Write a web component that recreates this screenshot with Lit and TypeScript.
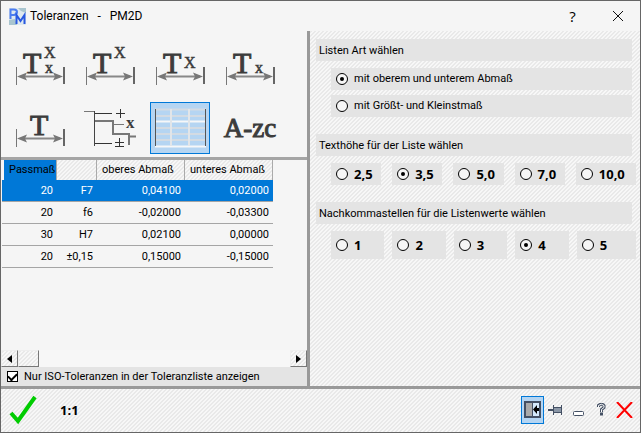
import { LitElement, html, svg, css } from "lit";
import { customElement, state } from "lit/decorators.js";

interface Row { size: string; fit: string; upper: string; lower: string; }

const ROWS: Row[] = [
  { size: "20", fit: "F7", upper: "0,04100", lower: "0,02000" },
  { size: "20", fit: "f6", upper: "-0,02000", lower: "-0,03300" },
  { size: "30", fit: "H7", upper: "0,02100", lower: "0,00000" },
  { size: "20", fit: "±0,15", upper: "0,15000", lower: "-0,15000" },
];

const dimension = svg`
  <path d="M3.500 22V40" stroke="#777" fill="none"/>
  <path d="M51 22V39" stroke="#666" stroke-width="2" fill="none"/>
  <path d="M9 31.500H47" stroke="#888" stroke-width="2" fill="none"/>
  <path d="M4 31.500L14 27.500L12 31.500L14 35.500ZM50 31.500L40 27.500L42 31.500L40 35.500Z" fill="#777"/>`;

const tolerance = (upper: number, lower: number, x = 10, y = 13) => html`
  <svg width="54" height="50" viewBox="0 -4 54 50" aria-hidden="true">
    ${dimension}
    <text x=${x} y="28" class="big">T</text>
    ${upper ? svg`<text x="31" y=${y} class="sup">X</text>` : ""}
    ${lower ? svg`<text x="32" y="28" class="sub">x</text>` : ""}
  </svg>`;

const stepIcon = html`
  <svg width="54" height="50" viewBox="0 -4 54 50" aria-hidden="true">
    <g fill="none" stroke="#777">
      <path d="M1 4.500H12"/><path d="M11.500 4V39" stroke="#444"/>
      <path d="M12 6.500H29M12 36.500H29" stroke="#333"/>
      <path d="M12 14H30V27H46V38M46 29.500H53" stroke-width="2"/>
      <path d="M30 17.500H41" />
      <path d="M33 6.500H42M37.500 2V11M32 35.500H41M36.500 31V39M32 39.500H41" stroke="#333"/>
    </g>
    <text x="43" y="21" class="step">x</text>
  </svg>`;

const tableIcon = html`
  <svg width="54" height="44" viewBox="0 0 54 44" aria-hidden="true">
    <path d="M2 3.500H53M2 10H53M2 22H53M2 28H53M2 34H53" stroke="#d3dbe3" stroke-width="2"/>
    <path d="M2 15.500H53M2 40.500H53" stroke="#f6f7f8" stroke-width="2"/>
    <path d="M18 3V40M36 3V40" stroke="#e1e5e9" stroke-width="2"/>
    <path d="M2.500 3V40M52.500 3V40" stroke="#555"/>
  </svg>`;

@customElement("app-root")
export class AppRoot extends LitElement {
  @state() private selected = 0;
  @state() private tool = 6;

  static styles = css`
    :host {
      display: flex;
      flex-direction: column;
      box-sizing: border-box;
      min-height: 100vh;
      border: 1px solid #666;
      background: #f5f5f5;
      color: #000;
      --hatch: linear-gradient(135deg, #e9e9e9 25%, #f7f7f7 25% 50%, #e9e9e9 50% 75%, #f7f7f7 75%) 0 0 / 4px 4px;
      --ui: Roboto, "Liberation Sans", sans-serif;
      font: 11px/16px var(--ui);
    }
    * { box-sizing: border-box; }
    button { padding: 0; border: 0; background: none; color: inherit; font: inherit; display: grid; place-items: center; }
    svg { display: block; }
    header { display: flex; align-items: center; height: 30px; padding-left: 8px; }
    header .logo { margin-right: 4px; }
    h1 { flex: 1; margin: 0; font: 12px/16px var(--ui); white-space: pre; }
    header button { width: 45px; height: 30px; }
    header .help { font: 15px/20px "Open Sans", sans-serif; }
    main { flex: 1; display: grid; grid-template-columns: minmax(0, 306fr) 3px minmax(0, 330fr); }
    .bar { background: #999; }
    .left { display: flex; flex-direction: column; }
    .tools { display: grid; grid-template-columns: repeat(4, 60px); gap: 10px; padding: 9px 9px 3px; }
    .tools button { height: 52px; border: 1px solid transparent; }
    .tools button.on { background: #b5d5f2; border-color: #0078d7; }
    text { font-family: "Liberation Serif", serif; fill: #3c3c3c; stroke: #3c3c3c; stroke-width: 0.5px; }
    .big { font-size: 30px; stroke-width: 1px; }
    .sup { font-size: 16px; }
    .sub { font-size: 16px; }
    .step { font-size: 17px; font-weight: bold; stroke: none; }
    .az { font: 27px/28px "Liberation Serif", serif; color: #3c3c3c; -webkit-text-stroke: 1px #3c3c3c; }
    .list { flex: 1; border-top: 3px solid #a5a5a5; padding-left: 1px; }
    table { border-collapse: separate; border-spacing: 0; table-layout: fixed; width: 271px; font: 11px/16px var(--ui); }
    th { height: 20px; padding: 0 0 0 5px; font-weight: normal; text-align: left; background: var(--hatch); border-right: 1px solid #aaa; white-space: nowrap; }
    th.key { background: #0078d7; border-left: 2px solid #f5f5f5; }
    td { height: 22px; padding: 0 4px 0 0; text-align: right; border-bottom: 1px solid #a5a5a5; }
    tr.on { background: #0078d7; color: #fff; }
    .scroll { display: flex; height: 17px; background: #f7f7f7; }
    .scroll button { width: 17px; background: var(--hatch); border: 1px solid; border-color: #eee #777 #777 #eee; }
    .scroll .thumb { width: 21px; margin-right: auto; }
    .iso { display: flex; align-items: center; gap: 6px; height: 19px; padding: 0 6px; background: #e4e4e4; }
    input { appearance: none; flex: none; margin: 0; background: #f6f6f6; border: 1px solid #000; display: grid; place-items: center; }
    .iso input { width: 11px; height: 11px; background: #fff; }
    .iso input:checked::before { content: ""; width: 7px; height: 4px; border: solid #000; border-width: 0 0 2px 2px; transform: translateY(-1px) rotate(-45deg); }
    .right { background: var(--hatch); padding: 8px 8px 8px 6px; }
    fieldset { border: 0; margin: 0 0 17px; padding: 0; min-width: 0; }
    legend { display: block; width: 100%; height: 22px; padding: 4px 3px 2px; background: #e4e4e4; margin-bottom: 7px; }
    .stack, .cols { display: grid; gap: 5px; padding-left: 15px; }
    .cols { grid-template-columns: repeat(4, minmax(0, 5fr)) minmax(0, 6fr); gap: 11px; margin-right: -4px; }
    .choice { display: flex; align-items: center; gap: 6px; height: 22px; padding-left: 5px; background: #e4e4e4; white-space: nowrap; }
    .choice input { width: 12px; height: 12px; border-radius: 50%; }
    .choice input:checked::before { content: ""; width: 4px; height: 4px; border-radius: 50%; background: #000; }
    .cols .choice { font: bold 13px/16px "Noto Sans", sans-serif; }
    .tall { grid-template-columns: repeat(4, minmax(0, 9fr)) minmax(0, 10fr); column-gap: 8px; }
    .tall .choice { height: 28px; }
    footer { display: flex; align-items: center; height: 46px; padding: 0 4px 2px 0; border-top: 3px solid #999; background: var(--hatch); }
    .ok { width: 44px; height: 40px; }
    .scale { margin: 0 auto 0 15px; font: bold 13px/16px "Open Sans", sans-serif; }
    footer .icon { width: 23px; height: 28px; }
    footer .dock { border: 1px solid #0078d7; background: #b5d5f2; }
  `;

  private radios(name: string, labels: string[], checked: number) {
    return labels.map((label, i) => html`
      <label class="choice">
        <input type="radio" name=${name} ?checked=${i === checked}>${label}
      </label>`);
  }

  render() {
    const tools: [string, unknown][] = [
      ["Beide Abmaße", tolerance(1, 1)],
      ["Oberes Abmaß", tolerance(1, 0)],
      ["Mittleres Abmaß", tolerance(1, 0, 10, 23)],
      ["Unteres Abmaß", tolerance(0, 1)],
      ["Maß", tolerance(0, 0, 17)],
      ["Abstufung", stepIcon],
      ["Toleranzliste", tableIcon],
      ["Text", html`<span class="az">A-zc</span>`],
    ];
    return html`
      <header>
        <svg class="logo" width="17" height="17" viewBox="0 0 17 17" aria-hidden="true">
          <rect width="17" height="17" fill="#dfe9ef"/>
          <path d="M9 0H17V5L12 3ZM0 12L6 11L8 17H0Z" fill="#a9c5cf"/>
          <path d="M1.500 11V1.500H5Q8 1.500 8 4T5 7H2" fill="none" stroke="#4c7df0" stroke-width="2"/>
          <path d="M7.500 16V7L11.500 13L15.500 7V16" fill="none" stroke="#2858e0" stroke-width="2"/>
        </svg>
        <h1>Toleranzen   -   PM2D</h1>
        <button class="help" aria-label="Hilfe">?</button>
        <button aria-label="Schließen">
          <svg width="10" height="10" viewBox="0 0 10 10"><path d="M0 0L10 10M10 0L0 10" stroke="#111"/></svg>
        </button>
      </header>
      <main>
        <section class="left">
          <div class="tools">
            ${tools.map(([label, icon], i) => html`
              <button class=${i === this.tool ? "on" : ""} aria-label=${label} @click=${() => (this.tool = i)}>${icon}</button>`)}
          </div>
          <div class="list">
            <table>
              <colgroup><col style="width:55px"><col style="width:40px"><col style="width:88px"><col style="width:88px"></colgroup>
              <thead><tr><th class="key">Passmaß</th><th></th><th>oberes Abmaß</th><th>unteres Abmaß</th></tr></thead>
              <tbody>
                ${ROWS.map((r, i) => html`
                  <tr class=${i === this.selected ? "on" : ""} @click=${() => (this.selected = i)}>
                    <td>${r.size}</td><td>${r.fit}</td><td>${r.upper}</td><td>${r.lower}</td>
                  </tr>`)}
              </tbody>
            </table>
          </div>
          <div class="scroll">
            <button aria-label="Nach links"><svg width="5" height="8"><path d="M5 0V8L0 4Z"/></svg></button>
            <button class="thumb" aria-label="Bildlauf"></button>
            <button aria-label="Nach rechts"><svg width="5" height="8"><path d="M0 0V8L5 4Z"/></svg></button>
          </div>
          <label class="iso"><input type="checkbox" checked>Nur ISO-Toleranzen in der Toleranzliste anzeigen</label>
        </section>
        <div class="bar"></div>
        <section class="right">
          <fieldset>
            <legend>Listen Art wählen</legend>
            <div class="stack">${this.radios("kind", ["mit oberem und unterem Abmaß", "mit Größt- und Kleinstmaß"], 0)}</div>
          </fieldset>
          <fieldset>
            <legend>Texthöhe für der Liste wählen</legend>
            <div class="cols">${this.radios("height", ["2,5", "3,5", "5,0", "7,0", "10,0"], 1)}</div>
          </fieldset>
          <fieldset>
            <legend>Nachkommastellen für die Listenwerte wählen</legend>
            <div class="cols tall">${this.radios("digits", ["1", "2", "3", "4", "5"], 3)}</div>
          </fieldset>
        </section>
      </main>
      <footer>
        <button class="ok" aria-label="OK">
          <svg width="28" height="30" viewBox="0 0 28 30"><path d="M2 18L9 26L26 2" fill="none" stroke="#00cc00" stroke-width="4"/></svg>
        </button>
        <span class="scale">1:1</span>
        <button class="icon dock" aria-label="Andocken">
          <svg width="17" height="17" viewBox="0 0 17 17"><rect x="1" y="1" width="15" height="15" fill="#d4e9fb" stroke="#445064" stroke-width="2"/><rect x="2" y="2" width="6" height="13" fill="#aaa"/><path d="M8.500 1V16" stroke="#445064"/><path d="M9 8.500L13 4V13ZM12 7H15V10H12Z"/></svg>
        </button>
        <button class="icon" aria-label="Anheften">
          <svg width="15" height="12" viewBox="0 0 15 12"><path d="M0 6H6" stroke="#445064" stroke-width="2"/><path d="M5.500 1V11M6 3.500H13M6 8.500H13M13.500 1V11" stroke="#445064" fill="none"/><path d="M6 6H13" stroke="#8a96a6" stroke-width="4"/></svg>
        </button>
        <button class="icon" aria-label="Minimieren">
          <svg width="11" height="12" viewBox="0 0 11 12"><rect x=".5" y="7.500" width="10" height="4" rx="1" fill="#fff" stroke="#445064"/></svg>
        </button>
        <button class="icon" aria-label="Hilfe">
          <svg width="9" height="13" viewBox="0 0 9 13"><path d="M1.500 4V2.500Q4.500 0 7 2.500V4.500L4.500 6.500V9" fill="none" stroke="#445064" stroke-width="3"/><path d="M1.500 4V2.500Q4.500 0 7 2.500V4.500L4.500 6.500V9" fill="none" stroke="#fff"/><rect x="3.500" y="10" width="2" height="2" fill="#fff" stroke="#445064"/></svg>
        </button>
        <button class="icon" aria-label="Abbrechen">
          <svg width="17" height="16" viewBox="0 0 17 16"><path d="M1 0L16 16M16 0L1 16" stroke="#f00" stroke-width="2"/></svg>
        </button>
      </footer>`;
  }
}
